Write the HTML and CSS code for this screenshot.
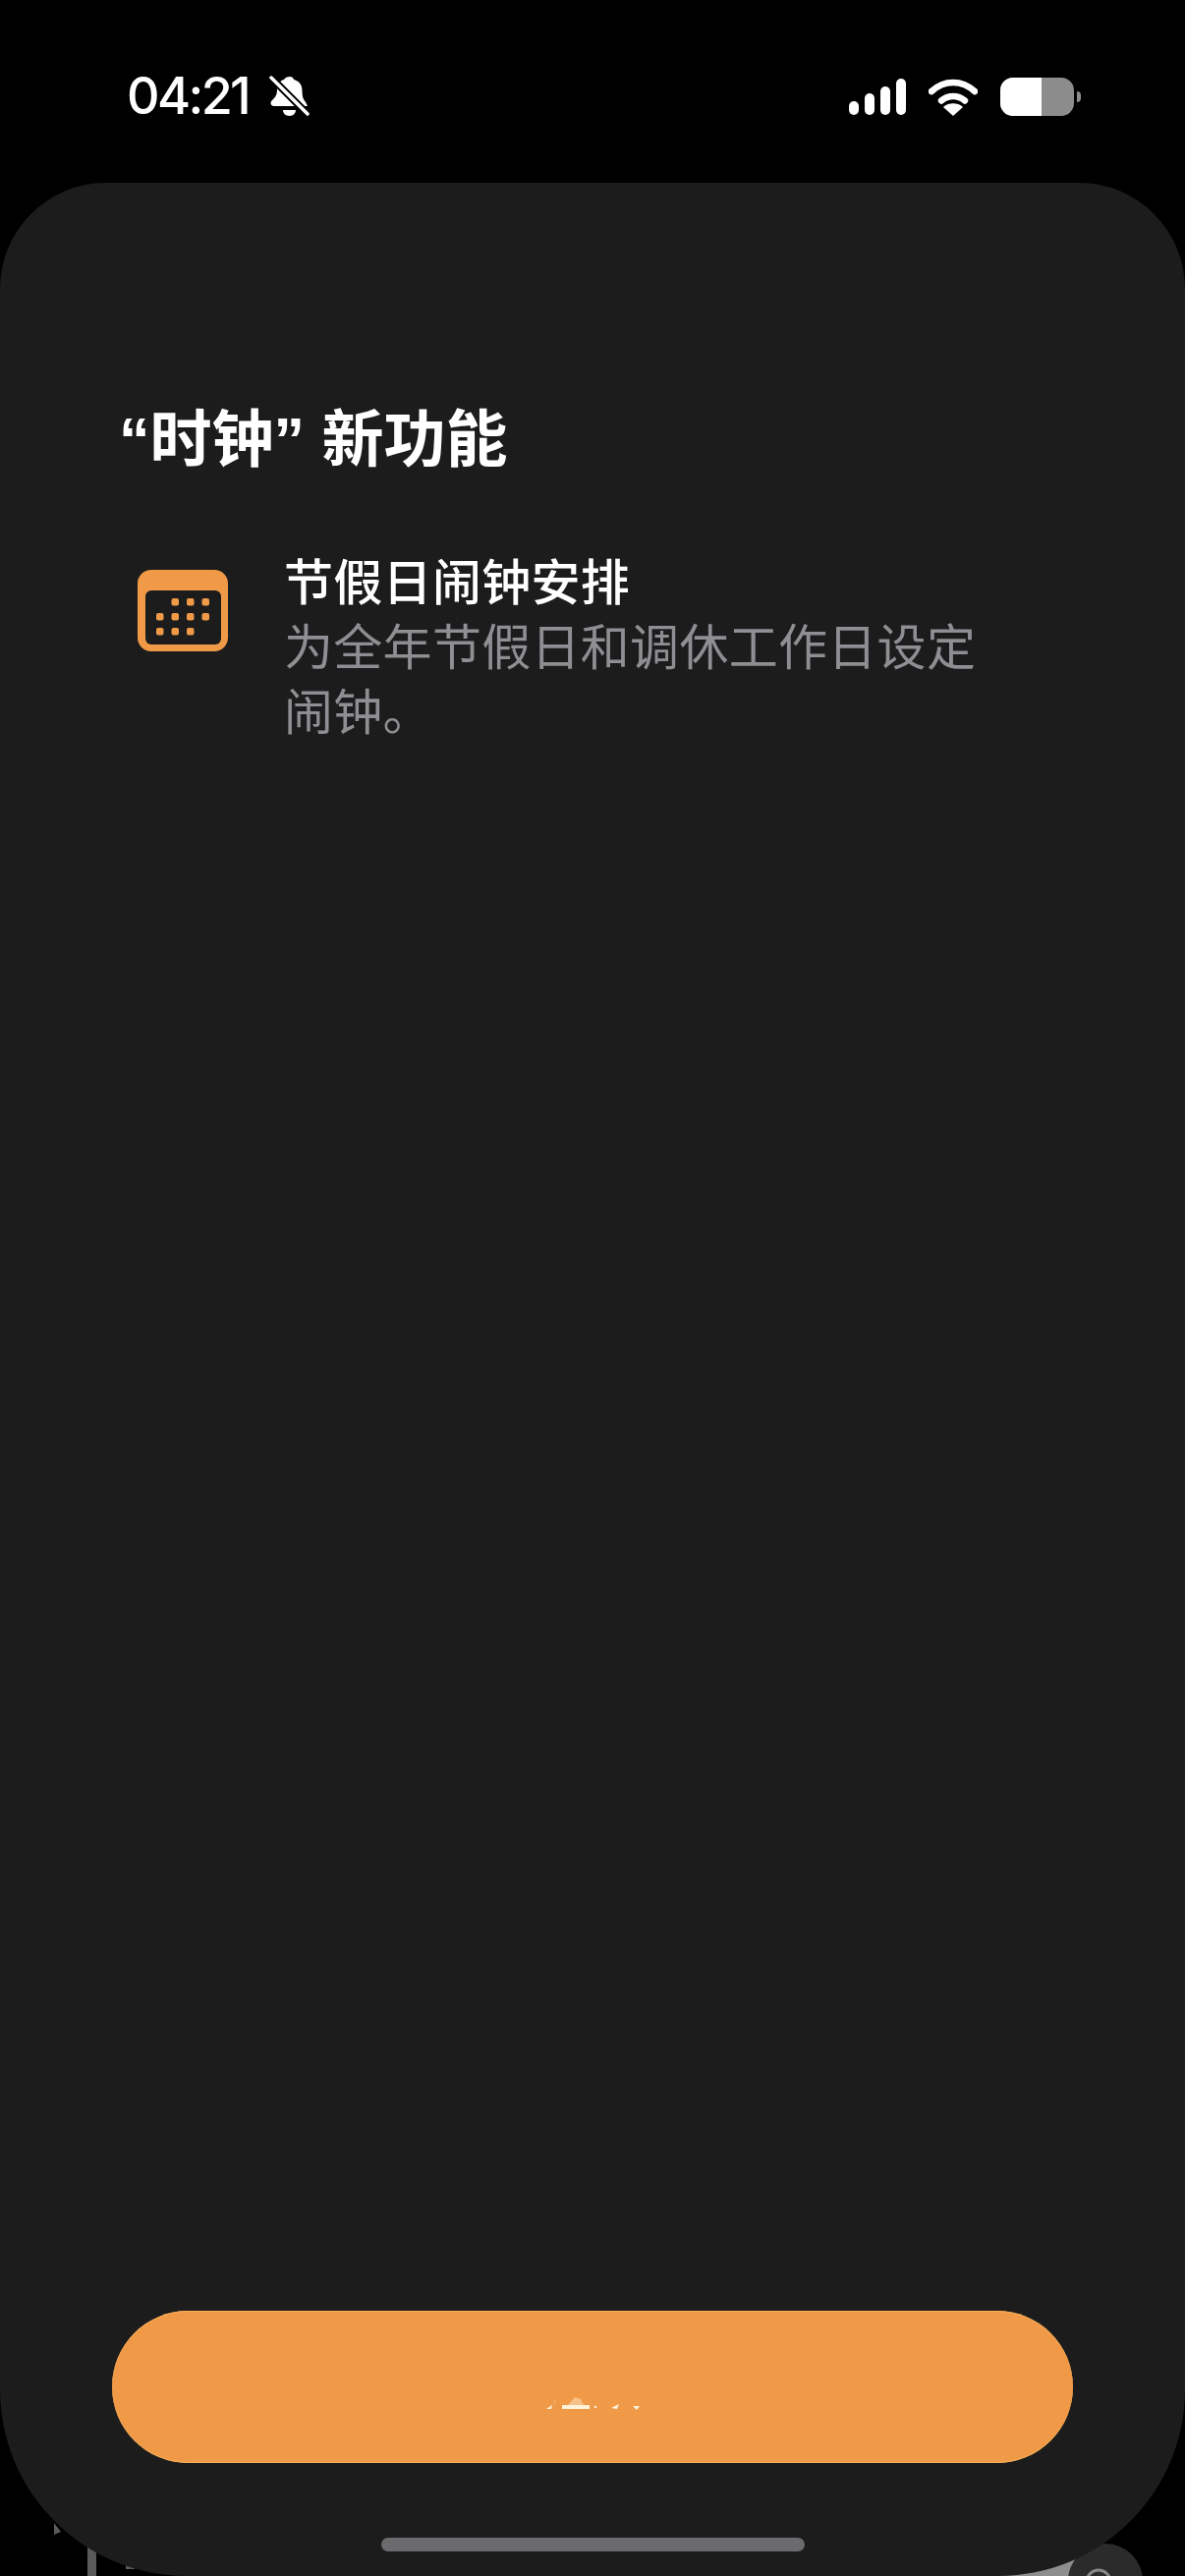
FILE: index.html
```html
<!DOCTYPE html>
<html lang="zh-CN">

<head>
    <meta charset="UTF-8">
    <meta name="viewport" content="width=device-width, initial-scale=1.0">
    <title>时钟</title>
    <link rel="stylesheet" href="styles.css">
</head>

<body>

    <!-- bits of the screen behind the sheet -->
    <svg class="behind-left" width="240" height="72" viewBox="0 0 240 72">
        <path d="M25 18l7 9-7 3z" fill="#5a5a5a" />
        <rect x="59" y="30" width="9" height="42" fill="#5a5a5a" />
        <rect x="98" y="56" width="9" height="9" fill="#5a5a5a" />
        <rect x="172" y="64" width="8" height="8" fill="#5a5a5a" />
    </svg>
    <svg class="behind-right" width="246" height="62" viewBox="0 0 246 62">
        <rect x="10" y="30" width="130" height="32" fill="#8e8e8e" />
        <circle cx="165" cy="67" r="38" fill="#2b2b2b" />
        <circle cx="158" cy="68" r="12" fill="none" stroke="#8a8a8a" stroke-width="3" />
    </svg>

    <header class="status-bar">
        <div class="status-left">
            <span class="time">04:21</span>
            <svg class="bell" width="42" height="44" viewBox="0 0 42 44">
                <path d="M22 2c2 0 3.500 1 4 3 6 1.500 8.500 6 8.500 11 0 5 .5 9 3.500 12l2 4H6c-2.500 0-3.500-1.500-3.500-3 0-1.500 1-3 3-4.500 3-3 3.500-6 3.500-10 0-5 3-8.500 7-9.500 1-2 3.500-3 6-3z" fill="#fff" />
                <path d="M15 36h13c0 3-2.500 6-6.500 6S15 39 15 36z" fill="#fff" />
                <path d="M1 1l40 40" stroke="#000" stroke-width="7.500" />
                <path d="M3 3l37 37" stroke="#fff" stroke-width="3.500" stroke-linecap="round" />
            </svg>
        </div>
        <div class="status-right">
            <svg width="58" height="37" viewBox="0 0 58 37">
                <rect x="0" y="23" width="10" height="14" rx="5" fill="#fff" />
                <rect x="16" y="15" width="10" height="22" rx="5" fill="#fff" />
                <rect x="32" y="8" width="10" height="29" rx="5" fill="#fff" />
                <rect x="48" y="0" width="10" height="37" rx="5" fill="#fff" />
            </svg>
            <svg width="50" height="38" viewBox="0 0 50 38">
                <path d="M3 13C16 1 34 1 47 13" fill="none" stroke="#fff" stroke-width="6.500" stroke-linecap="round" />
                <path d="M13 22.500c7-6 17-6 24 0" fill="none" stroke="#fff" stroke-width="6.500" stroke-linecap="round" />
                <path d="M25 37l-9-8c5-4 13-4 18 0z" fill="#fff" stroke="#fff" stroke-width="1.500" stroke-linejoin="round" />
            </svg>
            <div class="battery">
                <div class="battery-body">
                    <div class="battery-fill"></div>
                </div>
                <div class="battery-cap"></div>
            </div>
        </div>
    </header>

    <main class="sheet">
        <h1 class="title">“时钟” 新功能</h1>

        <div class="feature">
            <svg class="feature-icon" width="92" height="83" viewBox="0 0 92 83">
                <rect width="92" height="83" rx="14" fill="#f09a48" />
                <rect x="8" y="21" width="77" height="55" rx="6" fill="#1c1c1c" />
                <g fill="#f09a48">
                    <rect x="34.500" y="29" width="7.500" height="7.500" rx="2" />
                    <rect x="50" y="29" width="7.500" height="7.500" rx="2" />
                    <rect x="65.500" y="29" width="7.500" height="7.500" rx="2" />
                    <rect x="19" y="44" width="7.500" height="7.500" rx="2" />
                    <rect x="34.500" y="44" width="7.500" height="7.500" rx="2" />
                    <rect x="50" y="44" width="7.500" height="7.500" rx="2" />
                    <rect x="65.500" y="44" width="7.500" height="7.500" rx="2" />
                    <rect x="19" y="59" width="7.500" height="7.500" rx="2" />
                    <rect x="34.500" y="59" width="7.500" height="7.500" rx="2" />
                    <rect x="50" y="59" width="7.500" height="7.500" rx="2" />
                </g>
            </svg>
            <div class="feature-text">
                <h2>节假日闹钟安排</h2>
                <p>为全年节假日和调休工作日设定<br>闹钟。</p>
            </div>
        </div>

        <div class="sheet-bottom">
            <button class="continue">
                <svg class="continue-label" width="100" height="30" viewBox="0 0 100 30">
                    <path d="M3 24l6-4-1 4z" fill="#fff3dc" />
                    <path d="M10 17l4-3-3 5z" fill="#fff3dc" opacity=".3" />
                    <path d="M25 20l7-8 6 2 3 6z" fill="#fff3dc" opacity=".45" />
                    <path d="M19 20h28v4H19z" fill="#fff3dc" />
                    <circle cx="53" cy="22" r="1.200" fill="#fff3dc" />
                    <path d="M69 23l8-4-2 5z" fill="#fff3dc" />
                    <path d="M91 21h7l-3 4z" fill="#fff3dc" />
                </svg>
            </button>
            <div class="home-bar"></div>
        </div>
    </main>

</body>

</html>
```

FILE: styles.css
```css
* {
    padding: 0;
    margin: 0;
    box-sizing: border-box;
}

html,
body {
    height: 2622px;
    overflow: hidden;
}

body {
    background-color: #000;
    color: #fff;
    font-family: "Liberation Sans", "Noto Sans CJK SC", sans-serif;
    display: flex;
    flex-direction: column;
}

.behind-left {
    position: absolute;
    left: 30px;
    top: 2550px;
}

.behind-right {
    position: absolute;
    left: 960px;
    top: 2560px;
}

.status-bar {
    height: 186px;
    flex-shrink: 0;
    display: flex;
    justify-content: space-between;
    align-items: flex-start;
    padding: 70px 106px 0 129px;
}

.status-left {
    display: flex;
    align-items: center;
    gap: 20px;
}

.time {
    font-family: Inter, "Liberation Sans", sans-serif;
    font-size: 52px;
    font-weight: 500;
    line-height: 56px;
    letter-spacing: -2.6px;
}

.bell {
    display: block;
}

.status-right {
    display: flex;
    align-items: center;
    gap: 23px;
    padding-top: 9px;
}

.status-right svg {
    display: block;
}

.battery {
    display: flex;
    align-items: center;
    gap: 3px;
}

.battery-body {
    width: 75px;
    height: 39px;
    border-radius: 13px;
    background-color: #8c8c8c;
    overflow: hidden;
}

.battery-fill {
    width: 42px;
    height: 100%;
    background-color: #fff;
}

.battery-cap {
    width: 4px;
    height: 11px;
    background-color: #8c8c8c;
    border-radius: 0 6px 6px 0;
}

.sheet {
    position: relative;
    flex-grow: 1;
    background-color: #1c1c1c;
    border-radius: 108px 108px 190px 190px;
    padding: 222px 0 0 124px;
    display: flex;
    flex-direction: column;
}

.title {
    font-family: "Liberation Sans", "Noto Sans CJK SC", sans-serif;
    font-size: 63px;
    font-weight: 700;
    line-height: 78px;
    margin-left: -3px;
}

.feature {
    display: flex;
    align-items: flex-start;
    margin-top: 71px;
}

.feature-icon {
    display: block;
    margin: 23px 0 0 16px;
}

.feature-text {
    margin-left: 57px;
    font-family: "Noto Sans CJK SC", sans-serif;
}

.feature-text h2 {
    font-size: 50px;
    font-weight: 500;
    line-height: 65px;
    letter-spacing: 0.3px;
}

.feature-text p {
    font-size: 50px;
    font-weight: 400;
    line-height: 66px;
    letter-spacing: 0.3px;
    color: #8e8e93;
}

.sheet-bottom {
    position: absolute;
    left: 0;
    right: 0;
    bottom: 0;
    display: flex;
    flex-direction: column;
    align-items: center;
}

.continue {
    width: 978px;
    height: 155px;
    border: none;
    border-radius: 78px;
    background-color: #f09a48;
    box-shadow: inset 0 1px 0 #f5b05c, inset 0 -1px 0 #f5b05c;
    display: flex;
    justify-content: center;
    align-items: center;
    padding-top: 26px;
}

.continue-label {
    filter: blur(0.6px);
}

.home-bar {
    width: 431px;
    height: 14px;
    margin: 76px 0 25px;
    border-radius: 7px;
    background-color: #6b6b6d;
}
```
